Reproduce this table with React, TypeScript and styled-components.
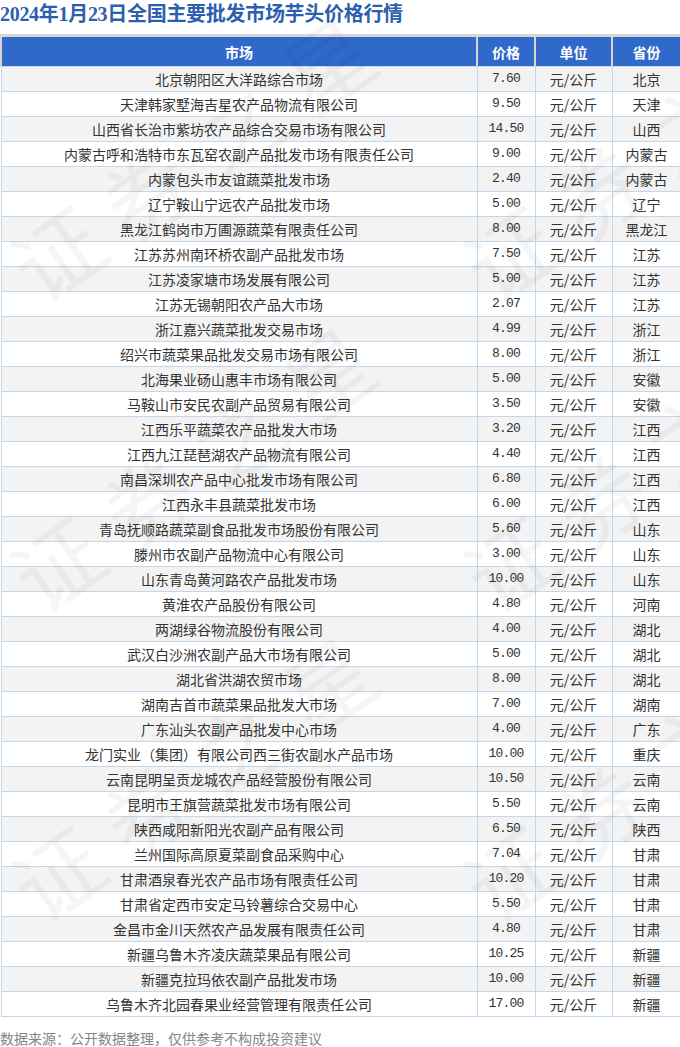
import React from "react";
import styled, { createGlobalStyle } from "styled-components";

const rows: [string, string, string][] = [
  ["北京朝阳区大洋路综合市场", "7.60", "北京"],
  ["天津韩家墅海吉星农产品物流有限公司", "9.50", "天津"],
  ["山西省长治市紫坊农产品综合交易市场有限公司", "14.50", "山西"],
  ["内蒙古呼和浩特市东瓦窑农副产品批发市场有限责任公司", "9.00", "内蒙古"],
  ["内蒙包头市友谊蔬菜批发市场", "2.40", "内蒙古"],
  ["辽宁鞍山宁远农产品批发市场", "5.00", "辽宁"],
  ["黑龙江鹤岗市万圃源蔬菜有限责任公司", "8.00", "黑龙江"],
  ["江苏苏州南环桥农副产品批发市场", "7.50", "江苏"],
  ["江苏凌家塘市场发展有限公司", "5.00", "江苏"],
  ["江苏无锡朝阳农产品大市场", "2.07", "江苏"],
  ["浙江嘉兴蔬菜批发交易市场", "4.99", "浙江"],
  ["绍兴市蔬菜果品批发交易市场有限公司", "8.00", "浙江"],
  ["北海果业砀山惠丰市场有限公司", "5.00", "安徽"],
  ["马鞍山市安民农副产品贸易有限公司", "3.50", "安徽"],
  ["江西乐平蔬菜农产品批发大市场", "3.20", "江西"],
  ["江西九江琵琶湖农产品物流有限公司", "4.40", "江西"],
  ["南昌深圳农产品中心批发市场有限公司", "6.80", "江西"],
  ["江西永丰县蔬菜批发市场", "6.00", "江西"],
  ["青岛抚顺路蔬菜副食品批发市场股份有限公司", "5.60", "山东"],
  ["滕州市农副产品物流中心有限公司", "3.00", "山东"],
  ["山东青岛黄河路农产品批发市场", "10.00", "山东"],
  ["黄淮农产品股份有限公司", "4.80", "河南"],
  ["两湖绿谷物流股份有限公司", "4.00", "湖北"],
  ["武汉白沙洲农副产品大市场有限公司", "5.00", "湖北"],
  ["湖北省洪湖农贸市场", "8.00", "湖北"],
  ["湖南吉首市蔬菜果品批发大市场", "7.00", "湖南"],
  ["广东汕头农副产品批发中心市场", "4.00", "广东"],
  ["龙门实业（集团）有限公司西三街农副水产品市场", "10.00", "重庆"],
  ["云南昆明呈贡龙城农产品经营股份有限公司", "10.50", "云南"],
  ["昆明市王旗营蔬菜批发市场有限公司", "5.50", "云南"],
  ["陕西咸阳新阳光农副产品有限公司", "6.50", "陕西"],
  ["兰州国际高原夏菜副食品采购中心", "7.04", "甘肃"],
  ["甘肃酒泉春光农产品市场有限责任公司", "10.20", "甘肃"],
  ["甘肃省定西市安定马铃薯综合交易中心", "5.50", "甘肃"],
  ["金昌市金川天然农产品发展有限责任公司", "4.80", "甘肃"],
  ["新疆乌鲁木齐凌庆蔬菜果品有限公司", "10.25", "新疆"],
  ["新疆克拉玛依农副产品批发市场", "10.00", "新疆"],
  ["乌鲁木齐北园春果业经营管理有限责任公司", "17.00", "新疆"],
];

// watermark tiles: centers of each "证券之星" stamp
const marks = [
  { x: 200, y: 150 },
  { x: 653, y: 150 },
  { x: 200, y: 460 },
  { x: 653, y: 460 },
  { x: 200, y: 770 },
  { x: 653, y: 770 },
];

const GlobalStyle = createGlobalStyle`
  html, body {
    margin: 0;
    padding: 0;
    background: #ffffff;
  }
  body {
    font-family: "Noto Sans CJK SC", "Noto Sans", sans-serif;
  }
`;

const Page = styled.div`
  position: relative;
  width: 680px;
  height: 1047px;
  overflow: hidden;
  background: #ffffff;
`;

const Title = styled.h1`
  margin: 0;
  height: 34px;
  line-height: 28px;
  font-family: "Liberation Serif", "Noto Sans CJK SC", serif;
  font-size: 20px;
  font-weight: bold;
  color: #2c5fae;
  white-space: nowrap;
  letter-spacing: -0.3px;
`;

const Table = styled.table`
  width: 680px;
  table-layout: fixed;
  border-collapse: collapse;
  font-size: 14px;
  color: #333333;
`;

const Head = styled.th`
  height: 29px;
  padding: 0;
  background: #2f69c9;
  color: #ffffff;
  font-weight: bold;
  font-size: 14px;
  text-align: center;
  border: 2px solid #d7d7d7;
  border-top-width: 3px;
  border-bottom: 1px solid #c2d6ec;
`;

const Row = styled.tr<{ $alt: boolean }>`
  background: ${(p) => (p.$alt ? "#f3f3f3" : "#ffffff")};
`;

const Cell = styled.td<{ $num?: boolean }>`
  height: 24px;
  padding: 0;
  line-height: 24px;
  text-align: center;
  white-space: nowrap;
  border: 1px solid #c2d6ec;
  font-family: ${(p) =>
    p.$num
      ? '"Liberation Mono", monospace'
      : '"Noto Sans CJK SC", "Noto Sans", sans-serif'};
  font-size: ${(p) => (p.$num ? "13px" : "14px")};
  letter-spacing: ${(p) => (p.$num ? "-0.8px" : "0")};
`;

const Source = styled.div`
  margin-top: 11px;
  font-size: 14px;
  line-height: 20px;
  color: #858585;
  white-space: nowrap;
`;

const Watermarks = styled.div`
  position: absolute;
  inset: 0;
  pointer-events: none;
`;

const Mark = styled.span<{ $x: number; $y: number }>`
  position: absolute;
  left: ${(p) => p.$x}px;
  top: ${(p) => p.$y}px;
  transform: translate(-50%, -50%) rotate(-35deg);
  font-family: "Noto Sans CJK SC", sans-serif;
  font-size: 88px;
  letter-spacing: 22px;
  line-height: 1;
  white-space: nowrap;
  color: rgba(0, 0, 0, 0.04);
`;

export default function App() {
  return (
    <Page>
      <GlobalStyle />
      <Title>2024年1月23日全国主要批发市场芋头价格行情</Title>
      <Table>
        <colgroup>
          <col style={{ width: 476 }} />
          <col style={{ width: 58 }} />
          <col style={{ width: 77 }} />
          <col style={{ width: 69 }} />
        </colgroup>
        <thead>
          <tr>
            <Head>市场</Head>
            <Head>价格</Head>
            <Head>单位</Head>
            <Head>省份</Head>
          </tr>
        </thead>
        <tbody>
          {rows.map(([market, price, prov], i) => (
            <Row key={market} $alt={i % 2 === 0}>
              <Cell>{market}</Cell>
              <Cell $num>{price}</Cell>
              <Cell>元/公斤</Cell>
              <Cell>{prov}</Cell>
            </Row>
          ))}
        </tbody>
      </Table>
      <Source>数据来源：公开数据整理，仅供参考不构成投资建议</Source>
      <Watermarks>
        {marks.map((m, i) => (
          <Mark key={i} $x={m.x} $y={m.y}>
            证券之星
          </Mark>
        ))}
      </Watermarks>
    </Page>
  );
}
